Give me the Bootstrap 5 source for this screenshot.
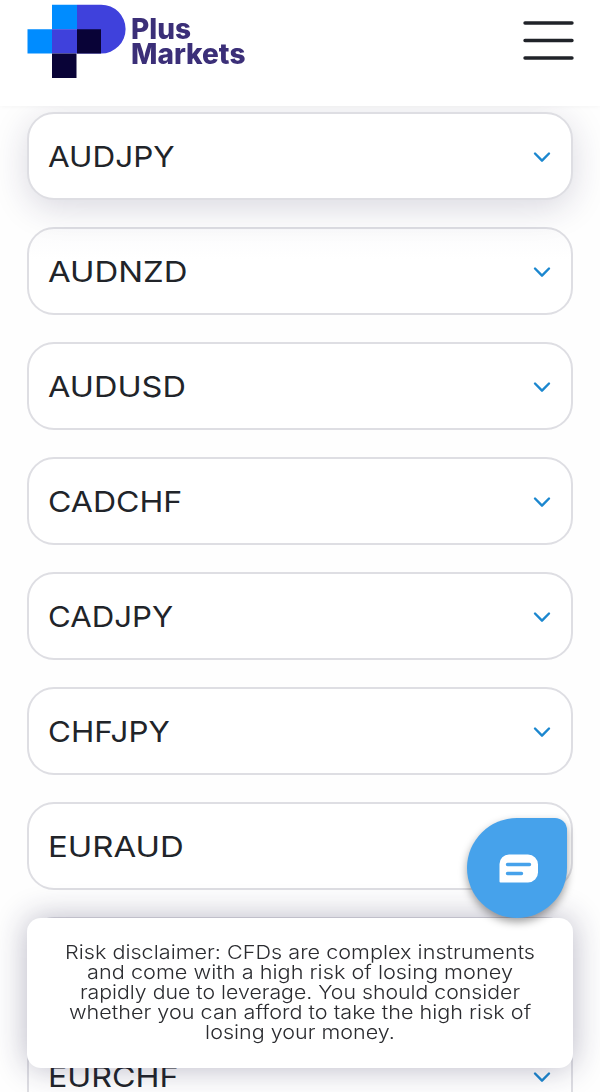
<!DOCTYPE html>
<html lang="en">
<head>
<meta charset="utf-8">
<meta name="viewport" content="width=device-width, initial-scale=1">
<title>Plus Markets</title>
<link href="https://cdn.jsdelivr.net/npm/bootstrap@5.3.0/dist/css/bootstrap.min.css" rel="stylesheet">
<style>
  body { font-family: Inter, "Liberation Sans", sans-serif; background: #fefefe; color: #212429; height: 1092px; overflow: hidden; }
  .site-header { height: 106px; padding: 4px 26px 0 27px; background: #fff; z-index: 1030; box-shadow: 0 0 6px rgba(0,0,0,.05); }
  .logo-name { font-size: 28px; line-height: 25px; font-weight: 800; color: #3b2f78; padding-top: 13px; margin-left: 5px; }
  .menu-btn { margin-top: 15px; }
  .pairs { padding: 112px 27px 0; gap: 27px; }
  .pair { flex: 0 0 88px; padding: 1px 20px 0 19px; border: 2px solid #dedee3; border-radius: 27px; background: #fff; }
  .pair.is-active { box-shadow: 0 8px 34px rgba(35,30,75,.17); }
  .pair.is-active + .pair { background: linear-gradient(#fbfbfc, #fff 30px); }
  .pair-name { font-size: 29px; line-height: 36px; transform: scaleX(var(--stretch)); transform-origin: left; }
  .pair svg { margin-right: -1px; }
  .risk { left: 27px; right: 27px; top: 918px; height: 150px; padding-top: 25px; border-radius: 14px; background: #fff; color: #2b2c30; font-size: 19px; line-height: 20px; font-weight: 300; box-shadow: 0 0 32px rgba(35,30,75,.32); z-index: 1020; }
  .risk span { display: block; white-space: nowrap; transform: scaleX(var(--stretch)); }
  .chat { left: 467px; top: 818px; width: 100px; height: 100px; background: #46a2eb; border-radius: 50% 12px 50% 50%; box-shadow: 0 4px 9px rgba(0,0,0,.38); z-index: 1040; padding: 2px 0 0 3px; }
</style>
</head>
<body>
<header class="site-header fixed-top d-flex justify-content-between align-items-start">
  <a class="d-flex text-decoration-none" href="#" aria-label="Plus Markets">
    <svg width="99" height="75" viewBox="0 0 99 75" aria-hidden="true">
      <path fill="#3f41dc" d="M50 .7h24.2a24.4 24.4 0 0 1 0 48.8H50z"/>
      <path fill="#008cff" d="M25 .7h25v24.5H25zM.5 25.2H25v24.3H.5z"/>
      <path fill="#3f41dc" d="M25 25.2h25v24.3H25z"/>
      <path fill="#090337" d="M50 25.2h24v24.3H50zM25 49.5h24.500V74H25z"/>
    </svg>
    <span class="logo-name">Plus<br>Markets</span>
  </a>
  <button class="menu-btn btn p-0 border-0 d-flex" type="button" aria-label="Menu">
    <svg width="51" height="44" viewBox="0 0 51 44"><path d="M2 4h47M2 21.500h47M2 39h47" stroke="#202329" stroke-width="3.4" stroke-linecap="round"/></svg>
  </button>
</header>

<main class="pairs d-flex flex-column" id="pairs"></main>

<section class="risk position-fixed text-center">
  <span style="--stretch:1.138">Risk disclaimer: CFDs are complex instruments</span>
  <span style="--stretch:1.143">and come with a high risk of losing money</span>
  <span style="--stretch:1.12">rapidly due to leverage. You should consider</span>
  <span style="--stretch:1.138">whether you can afford to take the high risk of</span>
  <span style="--stretch:1.133">losing your money.</span>
</section>

<button class="chat btn border-0 position-fixed d-flex align-items-center justify-content-center" type="button" aria-label="Chat">
  <svg width="40" height="30" viewBox="0 0 40 30">
    <path fill="#fff" d="M10 .5h19a10 10 0 0 1 10 10v8a10 10 0 0 1-10 10H1.500a1 1 0 0 1-1-1V10A9.500 9.500 0 0 1 10 .5z"/>
    <path d="M8.500 10.500h22M8.500 19.500h14" stroke="#46a2eb" stroke-width="3.400" stroke-linecap="round"/>
  </svg>
</button>

<script src="https://cdn.jsdelivr.net/npm/bootstrap@5.3.0/dist/js/bootstrap.bundle.min.js"></script>
<script>
  // The row without a name lies behind the fixed risk notice.
  const pairs = [
    ['AUDJPY', 1.085], ['AUDNZD', 1.135], ['AUDUSD', 1.12], ['CADCHF', 1.105],
    ['CADJPY', 1.075], ['CHFJPY', 1.08], ['EURAUD', 1.135], ['', 1], ['EURCHF', 1.11]
  ];
  document.getElementById('pairs').innerHTML = pairs.map(([name, stretch], i) => `
    <div class="pair d-flex align-items-center justify-content-between${i === 0 ? ' is-active position-relative' : ''}">
      <span class="pair-name" style="--stretch:${stretch}">${name}</span>
      <svg width="20" height="14" viewBox="0 0 20 14"><path d="M3 3.500l7 7.200 7-7.200" fill="none" stroke="#1b87cf" stroke-width="2.400" stroke-linecap="round" stroke-linejoin="round"/></svg>
    </div>`).join('');
</script>
</body>
</html>
